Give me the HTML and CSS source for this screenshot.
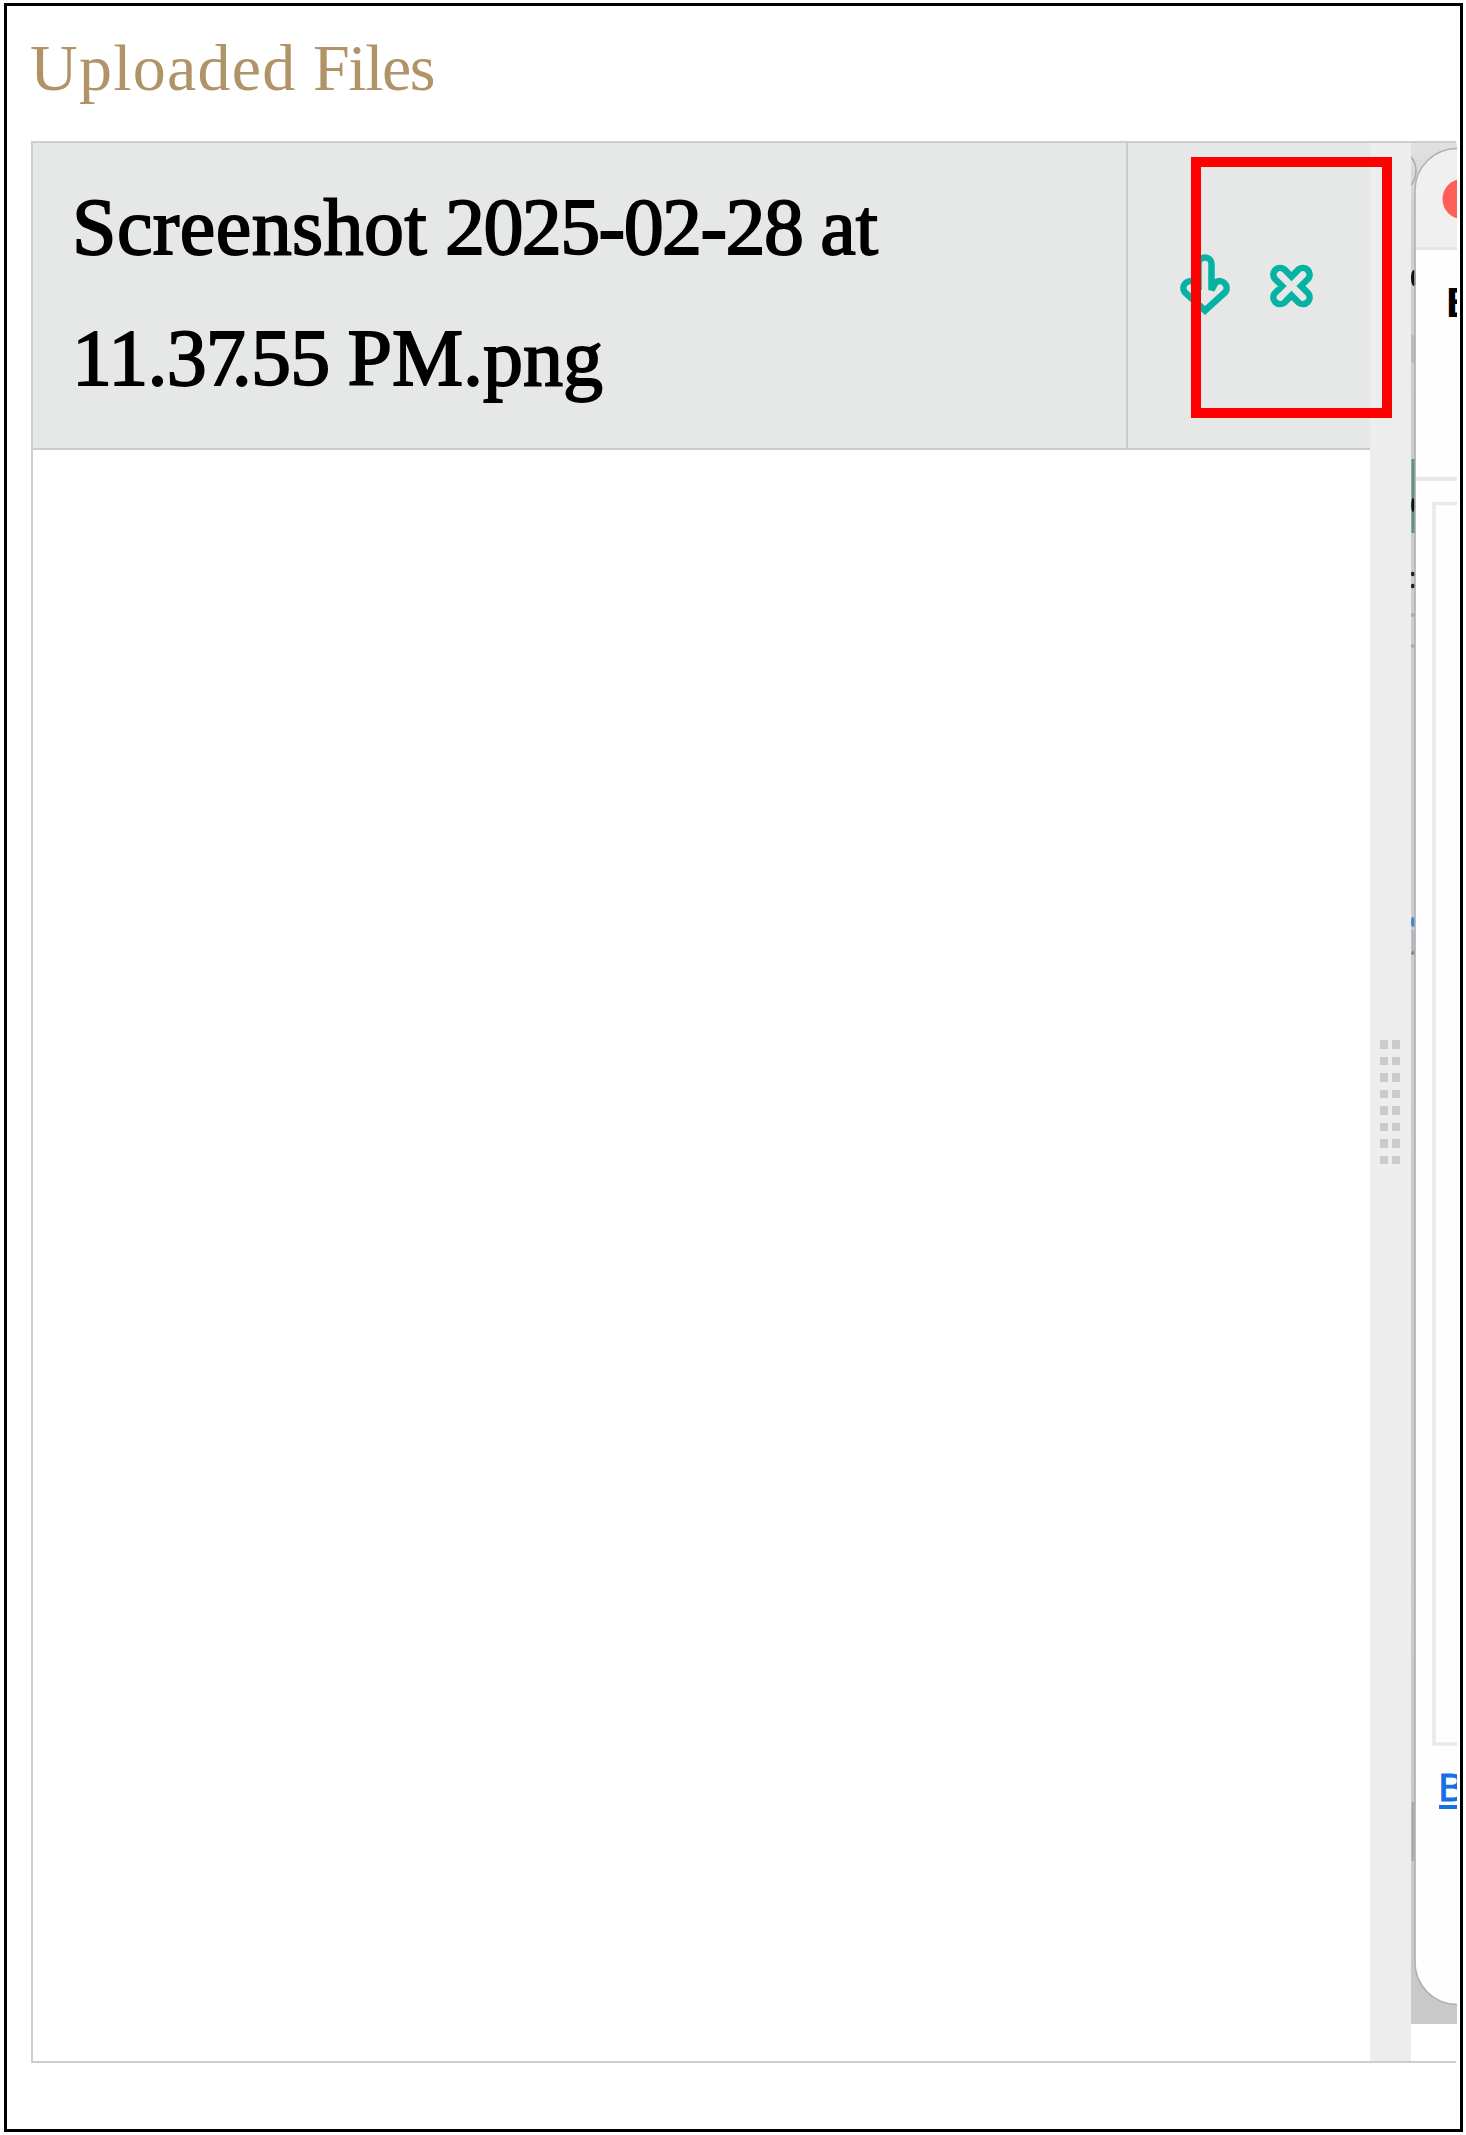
FILE: index.html
```html
<!DOCTYPE html>
<html lang="en">
<head>
<meta charset="utf-8">
<title>Uploaded Files</title>
<link rel="stylesheet" href="styles.css">
</head>
<body>
<main class="frame">
  <h1 class="title"><span class="uploaded">Uploaded</span> <span class="noun">Files</span></h1>
  <section class="viewer">
    <div class="files">
      <div class="file">
        <div class="name"><span class="word">Screenshot</span> <span class="date">2025-02-28</span> at<br><span class="time">11.3<span class="seven">7</span>.55</span> <span class="ext">PM.png</span></div>
        <div class="actions">
          <svg class="icons" viewBox="1128 143 242 305" fill="none" stroke="#06b2a4" stroke-width="6.500">
            <path d="M1198.5 290V264a6.5 6.5 0 0 1 13 0V290L1215.8 282.2a7 7 0 0 1 9.6 9.8L1205 310.5L1184.600 292a7 7 0 0 1 9.6 -9.800z"/>
            <path transform="translate(1291.500 286)" d="M0 -9.400L7.300 -16.700A6.700 6.700 0 0 1 16.700 -7.300L9.400 0L16.700 7.300A6.700 6.700 0 0 1 7.300 16.700L0 9.400L-7.300 16.700A6.700 6.700 0 0 1 -16.700 7.300L-9.400 0L-16.700 -7.300A6.700 6.700 0 0 1 -7.300 -16.700Z"/>
          </svg>
          <div class="highlight"></div>
        </div>
      </div>
    </div>
    <div class="splitter">
      <div class="grip"><i></i><i></i><i></i><i></i><i></i><i></i><i></i><i></i><i></i><i></i><i></i><i></i><i></i><i></i><i></i><i></i></div>
    </div>
    <svg class="preview" viewBox="1411 143 46 1881">
      <defs>
        <linearGradient id="shade" x1="0" y1="0" x2="0" y2="1">
          <stop offset="0" stop-color="#e1e1e1"/><stop offset=".04" stop-color="#cecece"/><stop offset="1" stop-color="#c9c9c9"/>
        </linearGradient>
        <clipPath id="win"><rect x="1415.500" y="149" width="200" height="1855" rx="42"/></clipPath>
      </defs>
      <rect x="1411" y="143" width="46" height="1881" fill="url(#shade)"/>
      <path d="M1411 157q5 6 5 14t-5 14" fill="none" stroke="#aaa" stroke-width="1.500"/>
      <rect x="1411" y="335" width="4" height="28" fill="#bbb"/>
      <ellipse cx="1414" cy="278" rx="3" ry="8" fill="#111"/>
      <rect x="1411.500" y="459" width="4" height="74" fill="#5f8e84"/>
      <ellipse cx="1413" cy="505" rx="1.800" ry="7" fill="#111"/>
      <circle cx="1413" cy="574" r="2.300" fill="#222"/>
      <circle cx="1413" cy="586" r="2.300" fill="#222"/>
      <circle cx="1413" cy="615" r="2" fill="#aaa"/>
      <circle cx="1413" cy="646" r="2" fill="#aaa"/>
      <ellipse cx="1413" cy="922" rx="2" ry="5" fill="#4388d0"/>
      <rect x="1411.500" y="930" width="3" height="22" fill="#b2b7c1"/>
      <circle cx="1413" cy="953" r="2" fill="#888"/>
      <rect x="1411.500" y="1802" width="3" height="59" fill="#aaa"/>
      <g clip-path="url(#win)">
        <rect x="1415" y="149" width="50" height="1856" fill="#fefefe"/>
        <rect x="1415" y="149" width="50" height="101" fill="#f0f0f0"/>
        <rect x="1415" y="247" width="50" height="3" fill="#e6e6e6"/>
      </g>
      <rect x="1415" y="148.500" width="200" height="1856" rx="42" fill="none" stroke="#b0b0b0" stroke-width="1.500"/>
      <circle cx="1462.500" cy="199" r="20" fill="#ff5f57"/>
      <path d="M1416 479H1457" stroke="#e8e8e8" stroke-width="4"/>
      <path d="M1458 503.500H1434V1744H1458" fill="none" stroke="#e8eaea" stroke-width="3.500"/>
      <text class="heading" x="1446" y="317">B</text>
      <text class="link" x="1438.500" y="1801">B</text>
      <rect x="1439" y="1805" width="20" height="4" fill="#1271e6"/>
    </svg>
  </section>
</main>
</body>
</html>
```
FILE: styles.css
```css
* { box-sizing: border-box; }
body { margin: 0; background: #fff; }
.frame {
  width: 1459px;
  height: 2129px;
  margin: 3px 0 0 4px;
  padding: 0 4px 0 24px;
  border: 3px solid #000;
  overflow: hidden;
  font-family: "Liberation Serif", serif;
}
.title {
  height: 135px;
  margin: 0 0 0 -1px;
  padding-top: 25px;
  font-size: 66px;
  line-height: 74px;
  font-weight: 400;
  color: #b09468;
  white-space: nowrap;
}
.uploaded { letter-spacing: 1.250px; }
.noun { letter-spacing: -1.500px; }
.viewer {
  display: flex;
  height: 1922px;
  border: 2px solid #cecece;
  border-right: 0;
}
.files { width: 1337px; flex: none; }
.file {
  display: flex;
  height: 307px;
  border-bottom: 2px solid #cbcdcc;
  background: #e6e8e7;
}
.name {
  width: 1095px;
  flex: none;
  padding: 19px 0 0 39px;
  border-right: 2px solid #cbcdcc;
  font-size: 80px;
  line-height: 130.500px;
  word-spacing: -2px;
  color: #000;
  -webkit-text-stroke: 1.800px #000;
  white-space: nowrap;
}
.word { letter-spacing: .4px; }
.date { letter-spacing: -1.600px; }
.time { letter-spacing: -.800px; }
.seven { letter-spacing: -14px; }
.actions { position: relative; width: 242px; }
.icons { display: block; width: 242px; height: 305px; }
.highlight {
  position: absolute;
  left: 63px;
  top: 14px;
  width: 201px;
  height: 261px;
  border: 10px solid #f00;
}
.splitter {
  display: flex;
  justify-content: center;
  width: 41px;
  flex: none;
  padding: 897px 2px 0 0;
  background: #ededed;
}
.grip {
  display: grid;
  grid-template-columns: 8px 8px;
  grid-auto-rows: 8.500px;
  gap: 8px 4px;
  align-content: start;
}
.grip i { background: #cbcbcb; }
.preview { width: 46px; height: 1881px; flex: none; }
.heading { font: 700 43px "Liberation Sans", sans-serif; }
.link { font: 39px "Liberation Sans", sans-serif; fill: #1271e6; stroke: #1271e6; stroke-width: 1px; }
```
